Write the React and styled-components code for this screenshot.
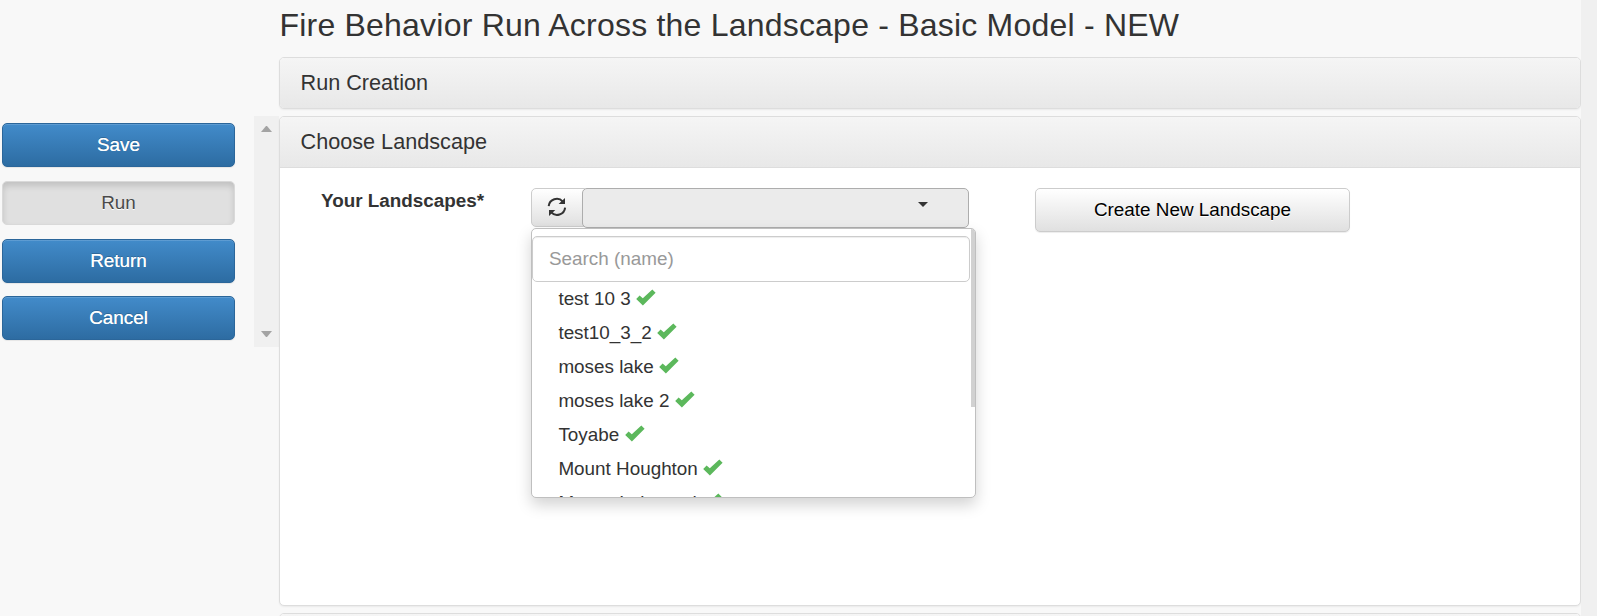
import React from "react";
import styled, { createGlobalStyle, css } from "styled-components";

const Global = createGlobalStyle`
  * { box-sizing: border-box; }
  body {
    margin: 0;
    overflow: hidden;
    background: #f8f8f8;
    color: #333;
    font: 18.88px/26px "Liberation Sans", Arial, sans-serif;
  }
`;

const Page = styled.div`
  display: flex;
  height: 616px;
  overflow: hidden;
`;

const Sidebar = styled.aside`
  display: flex;
  justify-content: space-between;
  width: 279px;
  height: 231px;
  margin-top: 116px;
  padding-left: 2px;
`;

const Actions = styled.div`
  width: 233px;
  padding-top: 7px;
`;

const buttonBase = css`
  display: block;
  height: 44px;
  padding: 0;
  border-radius: 5px;
  font: inherit;
  line-height: 42px;
  text-align: center;
`;

const ActionButton = styled.button`
  ${buttonBase}
  width: 100%;
  margin-bottom: ${(p) => p.$gap ?? 14}px;
  border: 1px solid #2b669a;
  color: #fff;
  background: linear-gradient(#428bca, #2d6ca2);
  text-shadow: 0 -1px 0 rgba(0, 0, 0, 0.2), 0 0 0.6px #fff;
  box-shadow: inset 0 1px 0 rgba(255, 255, 255, 0.15), 0 1px 1px rgba(0, 0, 0, 0.075);
  ${(p) =>
    p.$pressed &&
    css`
      border-color: #d9d9d9;
      color: #4a4a4a;
      background: #e0e0e0;
      text-shadow: 0 1px 0 #fff;
      box-shadow: inset 0 4px 6px rgba(0, 0, 0, 0.14);
    `}
`;

const SidebarTrack = styled.div`
  display: flex;
  flex-direction: column;
  align-items: center;
  justify-content: space-between;
  width: 25px;
  padding: 10px 0;
  background: #f0f0f0;
`;

const ScrollArrow = styled.span`
  width: 11px;
  border: 5px solid transparent;
  border-width: ${(p) => (p.$up ? "0 5px 6px" : "6px 5px 0")};
  border-color: ${(p) => (p.$up ? "transparent transparent #a3a3a3" : "#a3a3a3 transparent transparent")};
`;

const Main = styled.main`
  flex: 1;
  min-width: 0;
`;

const Title = styled.h1`
  height: 57px;
  margin: 0;
  padding: 1px 0 0 0.5px;
  font-size: 32px;
  font-weight: 400;
  letter-spacing: 0.21px;
  line-height: 49px;
  white-space: nowrap;
`;

const Panel = styled.section`
  height: ${(p) => p.$height}px;
  margin-bottom: 7px;
  border: 1px solid #ddd;
  border-radius: 5px;
  background: #fff;
  box-shadow: 0 1px 2px rgba(0, 0, 0, 0.06);
`;

const PanelHeading = styled.h2`
  height: ${(p) => (p.$open ? 51 : 50)}px;
  margin: 0;
  padding-left: 20.5px;
  border-bottom: ${(p) => (p.$open ? "1px solid #ddd" : "0")};
  border-radius: ${(p) => (p.$open ? "4px 4px 0 0" : "4px")};
  background: linear-gradient(#f5f5f5, #e8e8e8);
  font-size: 21.65px;
  font-weight: 400;
  line-height: 50px;
`;

const FormRow = styled.div`
  display: flex;
  align-items: flex-start;
  padding: 20px 0 0 41px;
`;

const FieldLabel = styled.label`
  width: 210px;
  font-weight: 700;
  line-height: 26px;
`;

const Picker = styled.div`
  position: relative;
  display: flex;
  align-items: flex-start;
  width: 438px;
`;

const RefreshButton = styled.button`
  display: flex;
  align-items: center;
  justify-content: center;
  width: 54px;
  height: 39px;
  margin-right: -3px;
  padding: 0 3px 2px 0;
  border: 1px solid #ccc;
  border-radius: 5px 0 0 5px;
  background: linear-gradient(#fff, #e0e0e0);
`;

const SelectBox = styled.div`
  position: relative;
  display: flex;
  flex: 1;
  justify-content: flex-end;
  height: 40px;
  padding: 13px 40px 0 0;
  border: 1px solid #adadad;
  border-radius: 5px;
  background: #ebebeb;
`;

const Caret = styled.span`
  width: 10px;
  height: 5px;
  border: solid transparent;
  border-width: 5px 5px 0;
  border-top-color: #333;
`;

const Menu = styled.div`
  position: absolute;
  top: 40px;
  left: 0;
  width: 445px;
  height: 270px;
  padding-top: 7px;
  overflow: hidden;
  border: 1px solid #bfbfbf;
  border-radius: 5px;
  background: #fff;
  box-shadow: 0 7px 15px rgba(0, 0, 0, 0.175);
`;

const SearchInput = styled.input`
  display: block;
  width: 438px;
  height: 46px;
  margin: 0;
  padding: 0 16px;
  border: 1px solid #ccc;
  border-radius: 5px;
  outline: 0;
  font: inherit;
  box-shadow: inset 0 1px 1px rgba(0, 0, 0, 0.075);
  &::placeholder { color: #999; opacity: 1; }
`;

const Option = styled.div`
  display: flex;
  height: 34px;
  padding-left: 26.4px;
  line-height: 34px;
  white-space: nowrap;
`;

const OkIcon = styled.svg`
  width: 20px;
  height: 17px;
  margin: 7px 0 0 5.3px;
`;

const MenuThumb = styled.div`
  position: absolute;
  top: 0;
  right: -1px;
  width: 5px;
  height: 178px;
  background: #d1d1d1;
`;

const CreateButton = styled.button`
  ${buttonBase}
  width: 315px;
  margin-left: 66px;
  border: 1px solid #ccc;
  color: #000;
  background: linear-gradient(#fff, #e0e0e0);
  text-shadow: 0 1px 0 #fff;
  box-shadow: inset 0 1px 0 rgba(255, 255, 255, 0.15), 0 1px 1px rgba(0, 0, 0, 0.075);
`;

const PageTrack = styled.div`
  width: 16px;
  background: #f0f0f0;
`;

const landscapes = ["test 10 3", "test10_3_2", "moses lake", "moses lake 2", "Toyabe", "Mount Houghton", "Moses Lake end"];

const Check = () => (
  <OkIcon viewBox="0 0 20 17">
    <path fill="#5cb85c" d="M.2 9.9 3.6 6.6 6.8 9.2 16.3.5 19.6 3.7 6.9 16.6Z" />
  </OkIcon>
);

const RefreshIcon = () => (
  <svg width="20" height="20" viewBox="0 0 20 20">
    <g fill="none" stroke="#333" strokeWidth="2">
      <path d="M1.7 9.2A8.1 8.1 0 0 1 15.8 4.6" />
      <path d="M18.1 10.6A8.1 8.1 0 0 1 4 15.2" />
    </g>
    <path fill="#333" d="M18 .9V6.9H11.6ZM2 18.9V12.9H8.3Z" />
  </svg>
);

export default function App() {
  return (
    <Page>
      <Global />
      <Sidebar>
        <Actions>
          <ActionButton>Save</ActionButton>
          <ActionButton $pressed>Run</ActionButton>
          <ActionButton $gap={13}>Return</ActionButton>
          <ActionButton $gap={0}>Cancel</ActionButton>
        </Actions>
        <SidebarTrack>
          <ScrollArrow $up />
          <ScrollArrow />
        </SidebarTrack>
      </Sidebar>
      <Main>
        <Title>Fire Behavior Run Across the Landscape - Basic Model - NEW</Title>
        <Panel $height={52}>
          <PanelHeading>Run Creation</PanelHeading>
        </Panel>
        <Panel $height={490}>
          <PanelHeading $open>Choose Landscape</PanelHeading>
          <FormRow>
            <FieldLabel>Your Landscapes*</FieldLabel>
            <Picker>
              <RefreshButton aria-label="Refresh">
                <RefreshIcon />
              </RefreshButton>
              <SelectBox>
                <Caret />
              </SelectBox>
              <Menu>
                <SearchInput placeholder="Search (name)" />
                {landscapes.map((name) => (
                  <Option key={name}>
                    {name}
                    <Check />
                  </Option>
                ))}
                <MenuThumb />
              </Menu>
            </Picker>
            <CreateButton>Create New Landscape</CreateButton>
          </FormRow>
        </Panel>
        <Panel $height={52}>
          <PanelHeading />
        </Panel>
      </Main>
      <PageTrack />
    </Page>
  );
}
